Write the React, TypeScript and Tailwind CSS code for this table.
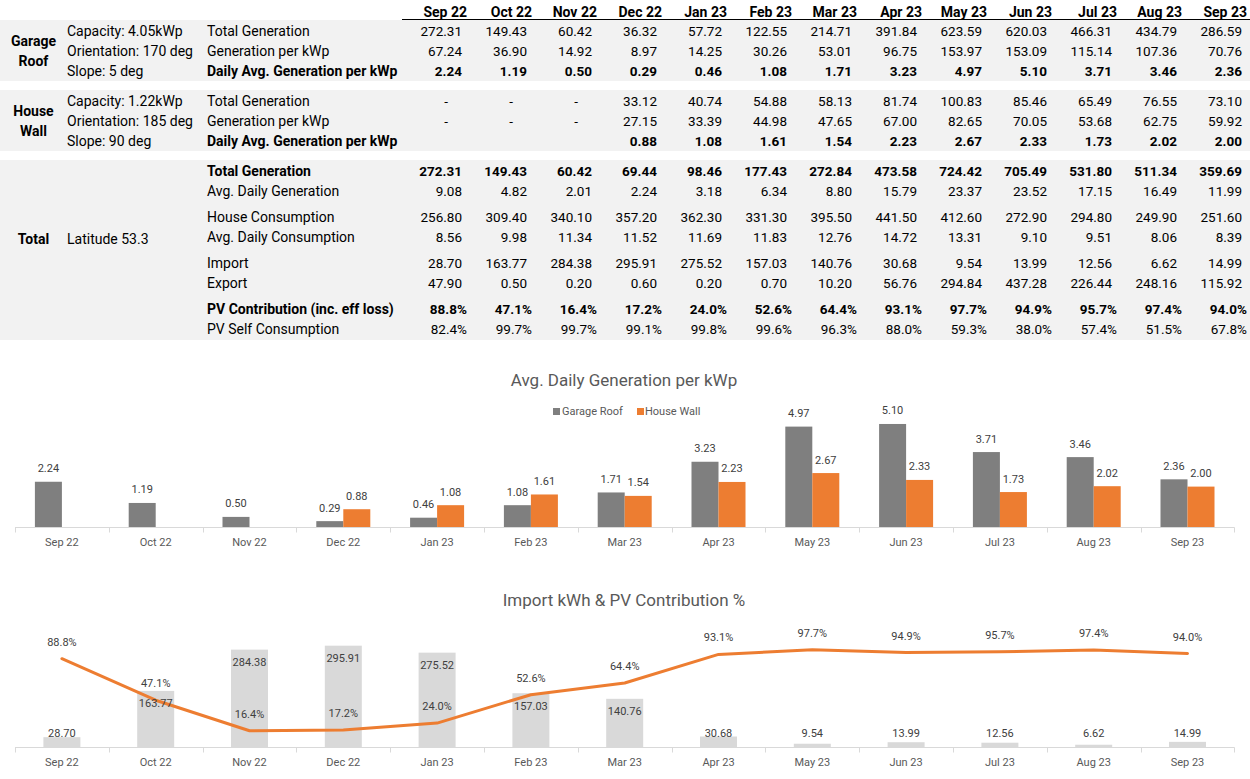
import React from "react";

const months = ["Sep 22","Oct 22","Nov 22","Dec 22","Jan 23","Feb 23","Mar 23","Apr 23","May 23","Jun 23","Jul 23","Aug 23","Sep 23"];

type RowDef = { label: string; bold?: boolean; values: string[] };

const garage: RowDef[] = [
  { label: "Total Generation", values: ["272.31","149.43","60.42","36.32","57.72","122.55","214.71","391.84","623.59","620.03","466.31","434.79","286.59"] },
  { label: "Generation per kWp", values: ["67.24","36.90","14.92","8.97","14.25","30.26","53.01","96.75","153.97","153.09","115.14","107.36","70.76"] },
  { label: "Daily Avg. Generation per kWp", bold: true, values: ["2.24","1.19","0.50","0.29","0.46","1.08","1.71","3.23","4.97","5.10","3.71","3.46","2.36"] },
];
const house: RowDef[] = [
  { label: "Total Generation", values: ["-","-","-","33.12","40.74","54.88","58.13","81.74","100.83","85.46","65.49","76.55","73.10"] },
  { label: "Generation per kWp", values: ["-","-","-","27.15","33.39","44.98","47.65","67.00","82.65","70.05","53.68","62.75","59.92"] },
  { label: "Daily Avg. Generation per kWp", bold: true, values: ["","","","0.88","1.08","1.61","1.54","2.23","2.67","2.33","1.73","2.02","2.00"] },
];
const totals: RowDef[][] = [
  [
    { label: "Total Generation", bold: true, values: ["272.31","149.43","60.42","69.44","98.46","177.43","272.84","473.58","724.42","705.49","531.80","511.34","359.69"] },
    { label: "Avg. Daily Generation", values: ["9.08","4.82","2.01","2.24","3.18","6.34","8.80","15.79","23.37","23.52","17.15","16.49","11.99"] },
  ],
  [
    { label: "House Consumption", values: ["256.80","309.40","340.10","357.20","362.30","331.30","395.50","441.50","412.60","272.90","294.80","249.90","251.60"] },
    { label: "Avg. Daily Consumption", values: ["8.56","9.98","11.34","11.52","11.69","11.83","12.76","14.72","13.31","9.10","9.51","8.06","8.39"] },
  ],
  [
    { label: "Import", values: ["28.70","163.77","284.38","295.91","275.52","157.03","140.76","30.68","9.54","13.99","12.56","6.62","14.99"] },
    { label: "Export", values: ["47.90","0.50","0.20","0.60","0.20","0.70","10.20","56.76","294.84","437.28","226.44","248.16","115.92"] },
  ],
  [
    { label: "PV Contribution (inc. eff loss)", bold: true, values: ["88.8%","47.1%","16.4%","17.2%","24.0%","52.6%","64.4%","93.1%","97.7%","94.9%","95.7%","97.4%","94.0%"] },
    { label: "PV Self Consumption", values: ["82.4%","99.7%","99.7%","99.1%","99.8%","99.6%","96.3%","88.0%","59.3%","38.0%","57.4%","51.5%","67.8%"] },
  ],
];

function Cell({ v, bold }: { v: string; bold?: boolean }) {
  const isPct = v.endsWith("%");
  const isDash = v === "-";
  const pad = isPct ? "pr-0" : isDash ? "pr-[19px]" : "pr-[5px]";
  return (
    <div className={`w-[65px] shrink-0 text-right text-[13.5px] ${pad} ${bold ? "font-bold" : ""}`}>{v}</div>
  );
}

function Row({ r }: { r: RowDef }) {
  return (
    <div className="flex h-[20px] items-center">
      <div className={`w-[195px] shrink-0 whitespace-nowrap text-[14px] ${r.bold ? "font-bold" : ""}`}>{r.label}</div>
      {r.values.map((v, i) => (
        <Cell key={i} v={v} bold={r.bold} />
      ))}
    </div>
  );
}

function SpecGroup({ name1, name2, specs, rows }: { name1: string; name2: string; specs: string[]; rows: RowDef[] }) {
  return (
    <div className="flex bg-[#f2f2f2] pt-px">
      <div className="flex w-[67px] shrink-0 flex-col items-center justify-center text-[14px] font-bold leading-[20px]">
        <div>{name1}</div>
        <div>{name2}</div>
      </div>
      <div className="flex w-[140px] shrink-0 flex-col">
        {specs.map((s) => (
          <div key={s} className="flex h-[20px] items-center whitespace-nowrap text-[14px]">{s}</div>
        ))}
      </div>
      <div className="flex flex-col">
        {rows.map((r) => (
          <Row key={r.label} r={r} />
        ))}
      </div>
    </div>
  );
}

const CW = 93.8;
const cx = (i: number) => 15 + CW * (i + 0.5);

const gDaily = [2.24,1.19,0.50,0.29,0.46,1.08,1.71,3.23,4.97,5.10,3.71,3.46,2.36];
const hDaily: (number | null)[] = [null,null,null,0.88,1.08,1.61,1.54,2.23,2.67,2.33,1.73,2.02,2.00];
const imports = [28.70,163.77,284.38,295.91,275.52,157.03,140.76,30.68,9.54,13.99,12.56,6.62,14.99];
const pv = [88.8,47.1,16.4,17.2,24.0,52.6,64.4,93.1,97.7,94.9,95.7,97.4,94.0];

function Axis() {
  return (
    <g>
      <line x1={15} x2={1234.5} y1={187.5} y2={187.5} stroke="#d9d9d9" strokeWidth={1} />
      {Array.from({ length: 14 }).map((_, k) => {
        const x = Math.round(15 + CW * k) + 0.5;
        return <line key={k} x1={x} x2={x} y1={187.5} y2={192.5} stroke="#d9d9d9" strokeWidth={1} />;
      })}
      {months.map((m, i) => (
        <text key={m} x={cx(i)} y={202} textAnchor="middle" dominantBaseline="central" fontSize={11} fill="#595959">{m}</text>
      ))}
    </g>
  );
}

function Chart1() {
  const base = 187;
  const k = 20.2;
  return (
    <svg width={1250} height={220} className="block font-['Roboto',sans-serif]">
      <text x={624} y={40} textAnchor="middle" dominantBaseline="central" fontSize={17} fill="#595959">Avg. Daily Generation per kWp</text>
      <rect x={553} y={68} width={7} height={7} fill="#7f7f7f" />
      <text x={562} y={71.5} dominantBaseline="central" fontSize={11} fill="#595959">Garage Roof</text>
      <rect x={637} y={68} width={7} height={7} fill="#ed7d31" />
      <text x={645} y={71.5} dominantBaseline="central" fontSize={11} fill="#595959">House Wall</text>
      {gDaily.map((v, i) => {
        const h = v * k;
        const x = cx(i) - 27;
        return (
          <g key={"g" + i}>
            <rect x={x} y={base - h} width={27} height={h} fill="#7f7f7f" />
            <text x={x + 13.5} y={base - h - 13} textAnchor="middle" dominantBaseline="central" fontSize={11} fill="#404040">{v.toFixed(2)}</text>
          </g>
        );
      })}
      {hDaily.map((v, i) => {
        if (v === null) return null;
        const h = v * k;
        const x = cx(i);
        return (
          <g key={"h" + i}>
            <rect x={x} y={base - h} width={27} height={h} fill="#ed7d31" />
            <text x={x + 13.5} y={base - h - 13} textAnchor="middle" dominantBaseline="central" fontSize={11} fill="#404040">{v.toFixed(2)}</text>
          </g>
        );
      })}
      <Axis />
    </svg>
  );
}

function Chart2() {
  const base = 187;
  const k = 0.3424;
  const py = (p: number) => base - p * 0.9945;
  const pts = pv.map((p, i) => `${cx(i).toFixed(1)},${py(p).toFixed(1)}`).join(" ");
  return (
    <svg width={1250} height={219} className="block font-['Roboto',sans-serif]">
      <text x={624} y={40} textAnchor="middle" dominantBaseline="central" fontSize={17} fill="#595959">Import kWh &amp; PV Contribution %</text>
      {imports.map((v, i) => {
        const h = v * k;
        const x = cx(i) - 18.5;
        return <rect key={"b" + i} x={x} y={base - h} width={37} height={h} fill="#d9d9d9" />;
      })}
      <Axis />
      <polyline points={pts} fill="none" stroke="#ed7d31" strokeWidth={3} strokeLinejoin="round" strokeLinecap="round" />
      {imports.map((v, i) => {
        const top = base - v * k;
        const y = Math.min(top + 13, 173);
        return (
          <text key={"bl" + i} x={cx(i)} y={y} textAnchor="middle" dominantBaseline="central" fontSize={11} fill="#404040">{v.toFixed(2)}</text>
        );
      })}
      {pv.map((p, i) => (
        <text key={"pl" + i} x={cx(i)} y={py(p) - 16.5} textAnchor="middle" dominantBaseline="central" fontSize={11} fill="#404040">{p.toFixed(1)}%</text>
      ))}
    </svg>
  );
}

export default function App() {
  return (
    <div className="h-[779px] w-[1250px] overflow-hidden bg-white font-['Roboto',sans-serif] text-black">
      <div className="flex h-[20px]">
        <div className="w-[402px] shrink-0" />
        {months.map((m) => (
          <div key={m} className="flex w-[65px] shrink-0 items-center justify-end border-b border-black pt-[5px] text-[14px] font-bold">{m}</div>
        ))}
        <div className="flex-1 border-b border-black" />
      </div>
      <SpecGroup name1="Garage" name2="Roof" specs={["Capacity: 4.05kWp", "Orientation: 170 deg", "Slope: 5 deg"]} rows={garage} />
      <div className="h-[9px]" />
      <SpecGroup name1="House" name2="Wall" specs={["Capacity: 1.22kWp", "Orientation: 185 deg", "Slope: 90 deg"]} rows={house} />
      <div className="h-[9px]" />
      <div className="flex bg-[#f2f2f2] pb-px pt-px">
        <div className="flex w-[207px] shrink-0 items-center pb-[22px] text-[14px]">
          <div className="w-[67px] text-center font-bold">Total</div>
          <div>Latitude 53.3</div>
        </div>
        <div className="flex flex-col gap-[6px]">
          {totals.map((pair, pi) => (
            <div key={pi} className="flex flex-col">
              {pair.map((r) => (
                <Row key={r.label} r={r} />
              ))}
            </div>
          ))}
        </div>
      </div>
      <Chart1 />
      <Chart2 />
    </div>
  );
}
